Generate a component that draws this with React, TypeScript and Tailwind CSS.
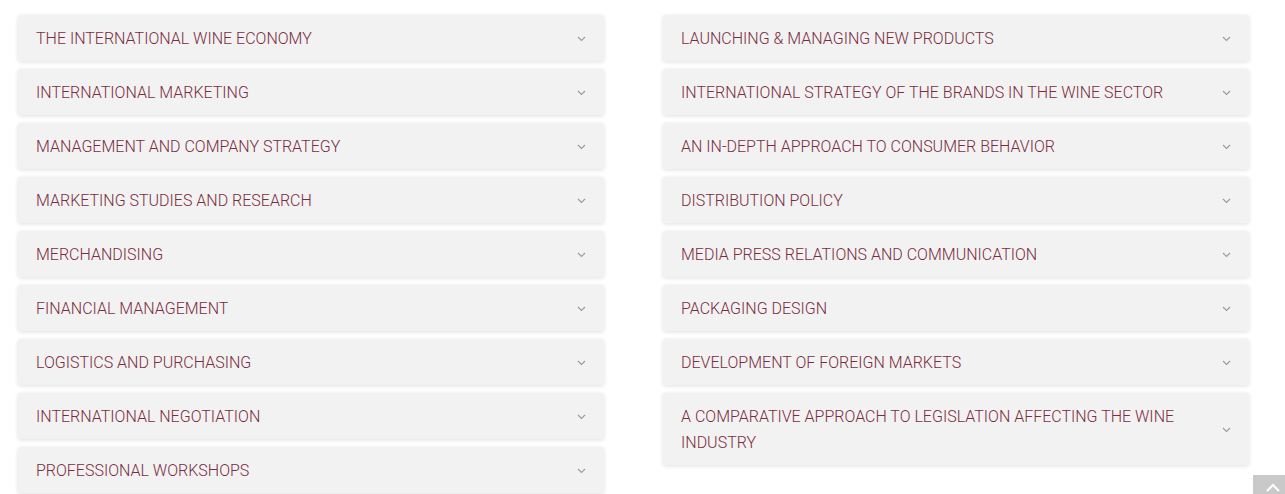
const left = [
  "THE INTERNATIONAL WINE ECONOMY",
  "INTERNATIONAL MARKETING",
  "MANAGEMENT AND COMPANY STRATEGY",
  "MARKETING STUDIES AND RESEARCH",
  "MERCHANDISING",
  "FINANCIAL MANAGEMENT",
  "LOGISTICS AND PURCHASING",
  "INTERNATIONAL NEGOTIATION",
  "PROFESSIONAL WORKSHOPS",
];

const right = [
  "LAUNCHING & MANAGING NEW PRODUCTS",
  "INTERNATIONAL STRATEGY OF THE BRANDS IN THE WINE SECTOR",
  "AN IN-DEPTH APPROACH TO CONSUMER BEHAVIOR",
  "DISTRIBUTION POLICY",
  "MEDIA PRESS RELATIONS AND COMMUNICATION",
  "PACKAGING DESIGN",
  "DEVELOPMENT OF FOREIGN MARKETS",
  "A COMPARATIVE APPROACH TO LEGISLATION AFFECTING THE WINE INDUSTRY",
];

function Chevron() {
  return (
    <svg width="9" height="6" viewBox="0 0 9 6" className="shrink-0 ml-6">
      <path d="M1 1l3.5 3.5L8 1" fill="none" stroke="#9a9a9a" strokeWidth="1.1" />
    </svg>
  );
}

function Item({ title }: { title: string }) {
  return (
    <div className="flex items-center justify-between bg-[#f2f2f2] rounded-[3px] shadow-[0_1px_4px_rgba(0,0,0,0.13)] pl-[18px] pr-[18px] pt-[11px] pb-[9px] cursor-pointer">
      <span className="text-[16px] leading-[26px] text-[#7a2c41] font-light max-w-[500px]">{title}</span>
      <Chevron />
    </div>
  );
}

export default function App() {
  return (
    <div className="relative w-[1285px] h-[494px] overflow-hidden bg-white font-['Roboto',sans-serif]">
      <div className="grid grid-cols-[586px_586px] gap-x-[59px] pl-[18px] pt-[15px]">
        <div className="flex flex-col gap-[8px]">
          {left.map((t) => (
            <Item key={t} title={t} />
          ))}
        </div>
        <div className="flex flex-col gap-[8px]">
          {right.map((t) => (
            <Item key={t} title={t} />
          ))}
        </div>
      </div>
      {/* back to top */}
      <div className="absolute left-[1253px] top-[475px] w-[40px] h-[40px] bg-[#c9c9c9] flex items-start justify-center pt-[8px]">
        <svg width="14" height="9" viewBox="0 0 14 9">
          <path d="M1 8l6-6 6 6" fill="none" stroke="#fff" strokeWidth="2.2" />
        </svg>
      </div>
    </div>
  );
}
